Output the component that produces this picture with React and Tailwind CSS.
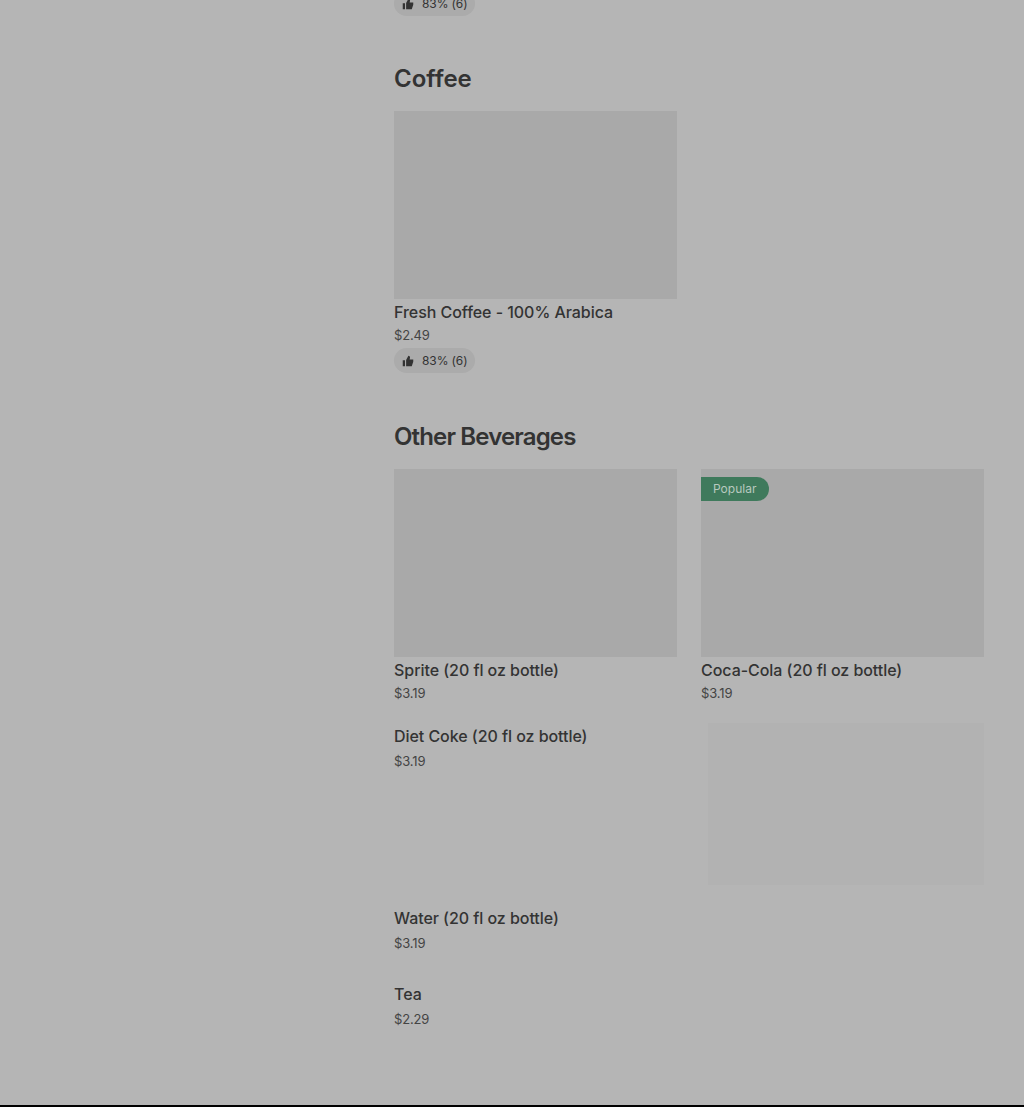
import React from "react";

const font = { fontFamily: "Inter, sans-serif" };

function ThumbIcon() {
  return (
    <svg width="12" height="12" viewBox="0 0 16 16" className="fill-[#333333]">
      <path d="M1 7h3v8H1zM5.500 15V6.800L8.500 1c1.400 0 2.200 1 2.200 2.200L10.200 6H15v3l-2 6z" />
    </svg>
  );
}

function RatingPill({ className = "" }) {
  return (
    <div className={`flex h-[25px] w-[81px] items-center gap-[8px] rounded-full bg-[#ababab] pl-[8px] text-[12px] tracking-[-0.1px] text-[#333333] ${className}`}>
      <ThumbIcon />
      <span>83% (6)</span>
    </div>
  );
}

function PhotoItem({ name, price, badge, rating }) {
  return (
    <div className="relative">
      <div className="h-[188px] bg-[#a9a9a9]" />
      {badge && (
        <div className="absolute left-0 top-[8px] flex h-[24px] items-center rounded-r-full bg-[#3f7a5c] pl-[12px] pr-[13px] text-[12px] text-[#b8c9bf]">
          {badge}
        </div>
      )}
      <div className="mt-[2px] text-[16px] font-medium leading-[22px] tracking-[-0.05px] text-[#333333]">{name}</div>
      <div className="mt-[2px] text-[13px] leading-[20px] tracking-[-0.15px] text-[#444444]">{price}</div>
      {rating && <RatingPill className="mt-[3px]" />}
    </div>
  );
}

function PlainItem({ name, price, className = "" }) {
  return (
    <div className={className}>
      <div className="text-[16px] font-medium leading-[22px] tracking-[-0.05px] text-[#333333]">{name}</div>
      <div className="mt-[4px] text-[13px] leading-[20px] tracking-[-0.15px] text-[#444444]">{price}</div>
    </div>
  );
}

export default function App() {
  return (
    <div style={font} className="flex h-[1107px] flex-col overflow-hidden bg-[#b5b5b5]">
      <main className="ml-[394px] w-[590px] flex-1">
        <RatingPill className="-mt-[9px]" />

        <h2 className="mt-[47px] text-[24px] font-semibold leading-[32px] text-[#333333]">Coffee</h2>
        <div className="mt-[16px] grid grid-cols-2 gap-x-[24px]">
          <PhotoItem name="Fresh Coffee - 100% Arabica" price="$2.49" rating />
        </div>

        <h2 className="mt-[48px] text-[24px] font-semibold leading-[32px] tracking-[-0.85px] text-[#333333]">Other Beverages</h2>
        <div className="mt-[16px] grid grid-cols-2 gap-x-[24px]">
          <PhotoItem name="Sprite (20 fl oz bottle)" price="$3.19" />
          <PhotoItem name="Coca-Cola (20 fl oz bottle)" price="$3.19" badge="Popular" />
        </div>

        <div className="mt-[22px] grid grid-cols-2 gap-x-[24px]">
          <PlainItem name="Diet Coke (20 fl oz bottle)" price="$3.19" />
          <div className="-mt-[2px] ml-[7px] h-[162px] bg-[#b2b2b2]" />
        </div>
        <PlainItem name="Water (20 fl oz bottle)" price="$3.19" className="mt-[22px]" />
        <PlainItem name="Tea" price="$2.29" className="mt-[30px]" />
      </main>
      <div className="h-[2px] bg-black" />
    </div>
  );
}
